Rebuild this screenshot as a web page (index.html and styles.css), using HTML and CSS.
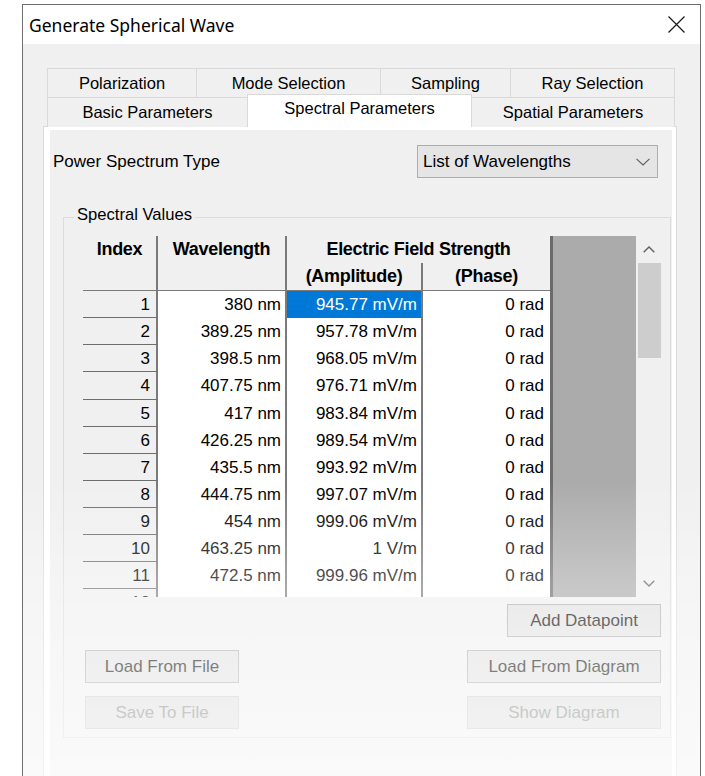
FILE: index.html
```html
<!DOCTYPE html>
<html lang="en">
<head>
<meta charset="utf-8">
<title>Generate Spherical Wave</title>
<link rel="stylesheet" href="styles.css">
</head>
<body>
<div class="window">
  <div class="titlebar">
    <span class="title">Generate Spherical Wave</span>
    <button class="close" aria-label="Close">
      <svg width="17" height="17" viewBox="0 0 17 17"><path d="M0.5 0.5 L16.5 16.5 M16.5 0.5 L0.5 16.5" stroke="#1a1a1a" stroke-width="1.2" fill="none"/></svg>
    </button>
  </div>

  <div class="client">
    <div class="tabstrip">
      <div class="tabrow">
        <div class="tab t-pol">Polarization</div>
        <div class="tab t-mode">Mode Selection</div>
        <div class="tab t-samp">Sampling</div>
        <div class="tab t-ray">Ray Selection</div>
      </div>
      <div class="tabrow">
        <div class="tab t-basic">Basic Parameters</div>
        <div class="tab t-spec active">Spectral Parameters</div>
        <div class="tab t-spat">Spatial Parameters</div>
      </div>
    </div>

    <div class="pane">
      <div class="page">
        <div class="type-row">
          <span class="label">Power Spectrum Type</span>
          <div class="combo">
            <span>List of Wavelengths</span>
            <svg width="14" height="8" viewBox="0 0 14 8"><path d="M0.5 0.8 L7 7 L13.5 0.8" stroke="#5c5c5c" stroke-width="1.1" fill="none"/></svg>
          </div>
        </div>

        <fieldset class="group">
          <legend>Spectral Values</legend>
          <div class="group-body">
            <div class="datagrid">
              <div class="sheet">
                <div class="hd hd-index">Index</div>
                <div class="hd hd-wave">Wavelength</div>
                <div class="hd hd-field">Electric Field Strength</div>
                <div class="hd hd-amp">(Amplitude)</div>
                <div class="hd hd-phase">(Phase)</div>

                <div class="rh">1</div><div class="c c-wave">380 nm</div><div class="c c-amp sel">945.77 mV/m</div><div class="c c-phase">0 rad</div>
                <div class="rh">2</div><div class="c c-wave">389.25 nm</div><div class="c c-amp">957.78 mV/m</div><div class="c c-phase">0 rad</div>
                <div class="rh">3</div><div class="c c-wave">398.5 nm</div><div class="c c-amp">968.05 mV/m</div><div class="c c-phase">0 rad</div>
                <div class="rh">4</div><div class="c c-wave">407.75 nm</div><div class="c c-amp">976.71 mV/m</div><div class="c c-phase">0 rad</div>
                <div class="rh">5</div><div class="c c-wave">417 nm</div><div class="c c-amp">983.84 mV/m</div><div class="c c-phase">0 rad</div>
                <div class="rh">6</div><div class="c c-wave">426.25 nm</div><div class="c c-amp">989.54 mV/m</div><div class="c c-phase">0 rad</div>
                <div class="rh">7</div><div class="c c-wave">435.5 nm</div><div class="c c-amp">993.92 mV/m</div><div class="c c-phase">0 rad</div>
                <div class="rh">8</div><div class="c c-wave">444.75 nm</div><div class="c c-amp">997.07 mV/m</div><div class="c c-phase">0 rad</div>
                <div class="rh">9</div><div class="c c-wave">454 nm</div><div class="c c-amp">999.06 mV/m</div><div class="c c-phase">0 rad</div>
                <div class="rh">10</div><div class="c c-wave">463.25 nm</div><div class="c c-amp">1 V/m</div><div class="c c-phase">0 rad</div>
                <div class="rh">11</div><div class="c c-wave">472.5 nm</div><div class="c c-amp">999.96 mV/m</div><div class="c c-phase">0 rad</div>
                <div class="rh">12</div><div class="c c-wave"></div><div class="c c-amp"></div><div class="c c-phase"></div>
              </div>
              <div class="filler"></div>
              <div class="vscroll">
                <div class="sb-btn">
                  <svg width="12" height="7" viewBox="0 0 12 7"><path d="M0.7 6.3 L6 1 L11.3 6.3" stroke="#606060" stroke-width="1.4" fill="none"/></svg>
                </div>
                <div class="sb-thumb"></div>
                <div class="sb-track"></div>
                <div class="sb-btn">
                  <svg width="12" height="7" viewBox="0 0 12 7"><path d="M0.7 0.7 L6 6 L11.3 0.7" stroke="#606060" stroke-width="1.4" fill="none"/></svg>
                </div>
              </div>
            </div>

            <div class="actions">
              <div class="act-row end">
                <button class="btn btn-sm">Add Datapoint</button>
              </div>
              <div class="act-row">
                <button class="btn btn-sm">Load From File</button>
                <button class="btn btn-lg">Load From Diagram</button>
              </div>
              <div class="act-row">
                <button class="btn btn-sm" disabled>Save To File</button>
                <button class="btn btn-lg" disabled>Show Diagram</button>
              </div>
            </div>
          </div>
        </fieldset>
      </div>
    </div>
  </div>

  <div class="fade"></div>
</div>
</body>
</html>
```

FILE: styles.css
```css
* { box-sizing: border-box; }

html, body {
  margin: 0;
  background: #ffffff;
}

body {
  height: 776px;
  overflow: hidden;
  font-family: "Liberation Sans", Arial, sans-serif;
  font-size: 17px;
  color: #000;
}

/* dialog frame */
.window {
  position: relative;
  margin: 4px 0 0 22px;
  width: 679px;
  height: 780px;
  border: 1px solid #6f6f6f;
  border-bottom: none;
  background: #f0f0f0;
  overflow: hidden;
}

.titlebar {
  height: 39px;
  background: #ffffff;
  display: flex;
  align-items: center;
  justify-content: space-between;
  padding-left: 6px;
}

.title {
  font-family: "Noto Sans", "Liberation Sans", sans-serif;
  font-size: 17.5px;
  color: #000;
}

.close {
  width: 46px;
  height: 39px;
  margin-right: 1px;
  border: none;
  background: transparent;
  padding: 0;
  display: flex;
  align-items: center;
  justify-content: center;
}

/* tab control */
.client {
  padding: 24px 23px 0 20px;
}

.tabstrip {
  padding: 0 2px 0 4px;
}

.tabrow {
  display: flex;
  height: 29px;
}

.tab {
  height: 30px;
  border: 1px solid #d9d9d9;
  border-bottom: none;
  background: #f0f0f0;
  font-size: 16.5px;
  line-height: 29px;
  text-align: center;
  white-space: nowrap;
  margin-left: -1px;
}

.tab:first-child { margin-left: 0; }

.t-pol { width: 150px; }
.t-mode { width: 185px; }
.t-samp { width: 131px; }
.t-ray { width: 165px; }
.t-basic { width: 201px; }
.t-spec { width: 225px; }
.t-spat { width: 204px; }

.tab.active {
  position: relative;
  z-index: 1;
  margin-top: -3px;
  height: 33px;
  background: #ffffff;
  line-height: 27px;
}

.pane {
  border: 1px solid #d9d9d9;
  background: #ffffff;
  padding: 3px 4px 3px 6px;
  height: 700px;
}

.page {
  background: #f0f0f0;
  height: 100%;
  padding-top: 15px;
}

/* spectrum type selector */
.type-row {
  display: flex;
  align-items: center;
  justify-content: space-between;
  margin: 0 14px 0 3px;
}

.combo {
  width: 241px;
  height: 33px;
  border: 1px solid #adadad;
  background: #e5e5e5;
  display: flex;
  align-items: center;
  justify-content: space-between;
  padding: 0 7px 0 5px;
}

/* group box */
.group {
  margin: 27px 1px 0 13px;
  padding: 0;
  border: 1px solid #dcdcdc;
  min-inline-size: 0;
}

.group legend {
  margin-left: 10px;
  padding: 0 3px 4px;
  line-height: 20px;
  font-size: 16.6px;
}

.group-body {
  padding: 7px 8px 8px 19px;
}

/* data grid */
.datagrid {
  display: flex;
  height: 361px;
  overflow: hidden;
}

.sheet {
  width: 467px;
  display: grid;
  grid-template-columns: 75px 129px 136px 127px;
  grid-template-rows: 27px 28px repeat(12, 27.14px);
  align-content: start;
}

.hd {
  font-weight: bold;
  font-size: 18px;
  letter-spacing: -0.3px;
  line-height: 27px;
  text-align: center;
  white-space: nowrap;
  border-bottom: 1px solid #7a7a7a;
}

.hd-index { grid-row: 1 / 3; grid-column: 1; border-right: 2px solid #7a7a7a; }
.hd-wave { grid-row: 1 / 3; grid-column: 2; border-right: 2px solid #7a7a7a; }
.hd-field { grid-row: 1; grid-column: 3 / 5; border-bottom: none; }
.hd-amp { grid-row: 2; grid-column: 3; border-right: 2px solid #7a7a7a; }
.hd-phase { grid-row: 2; grid-column: 4; }

.rh {
  background: #f0f0f0;
  border-right: 2px solid #7a7a7a;
  border-bottom: 1px solid #6e6e6e;
  text-align: right;
  padding-right: 6px;
  line-height: 27px;
}

.c {
  background: #ffffff;
  text-align: right;
  padding-right: 4px;
  line-height: 27px;
  white-space: nowrap;
}

.c-wave, .c-amp { border-right: 2px solid #7a7a7a; }
.c-phase { padding-right: 6px; }

.c.sel {
  background: #0078d7;
  color: #ffffff;
}

.filler {
  width: 86px;
  border-left: 3px solid #6b6b6b;
  background: #ababab;
}

.vscroll {
  width: 26px;
  background: #f0f0f0;
  display: flex;
  flex-direction: column;
}

.sb-btn {
  height: 27px;
  display: flex;
  align-items: center;
  justify-content: center;
}

.sb-thumb {
  height: 95px;
  margin: 0 1px 0 2px;
  background: #cdcdcd;
}

.sb-track { flex: 1; }

/* buttons */
.actions {
  display: flex;
  flex-direction: column;
  gap: 13px;
  margin-top: 7px;
}

.act-row {
  display: flex;
  justify-content: space-between;
  padding: 0 1px 0 2px;
}

.act-row.end { justify-content: flex-end; }

.btn {
  height: 33px;
  border: 1px solid #adadad;
  background: #e1e1e1;
  font-family: "Liberation Sans", Arial, sans-serif;
  font-size: 17px;
  color: #000;
  padding: 0;
}

.btn-sm { width: 154px; }
.btn-lg { width: 194px; }

.btn:disabled {
  background: #dedede;
  border-color: #cacaca;
  color: #838383;
}

/* soft fade-out over the lower part of the dialog */
.fade {
  position: absolute;
  left: -1px;
  right: -1px;
  top: 476px;
  bottom: 0;
  pointer-events: none;
  background: linear-gradient(to bottom,
    rgba(255, 255, 255, 0) 0%,
    rgba(255, 255, 255, 0.33) 34%,
    rgba(255, 255, 255, 0.5) 63%,
    rgba(255, 255, 255, 0.68) 100%);
}
```
